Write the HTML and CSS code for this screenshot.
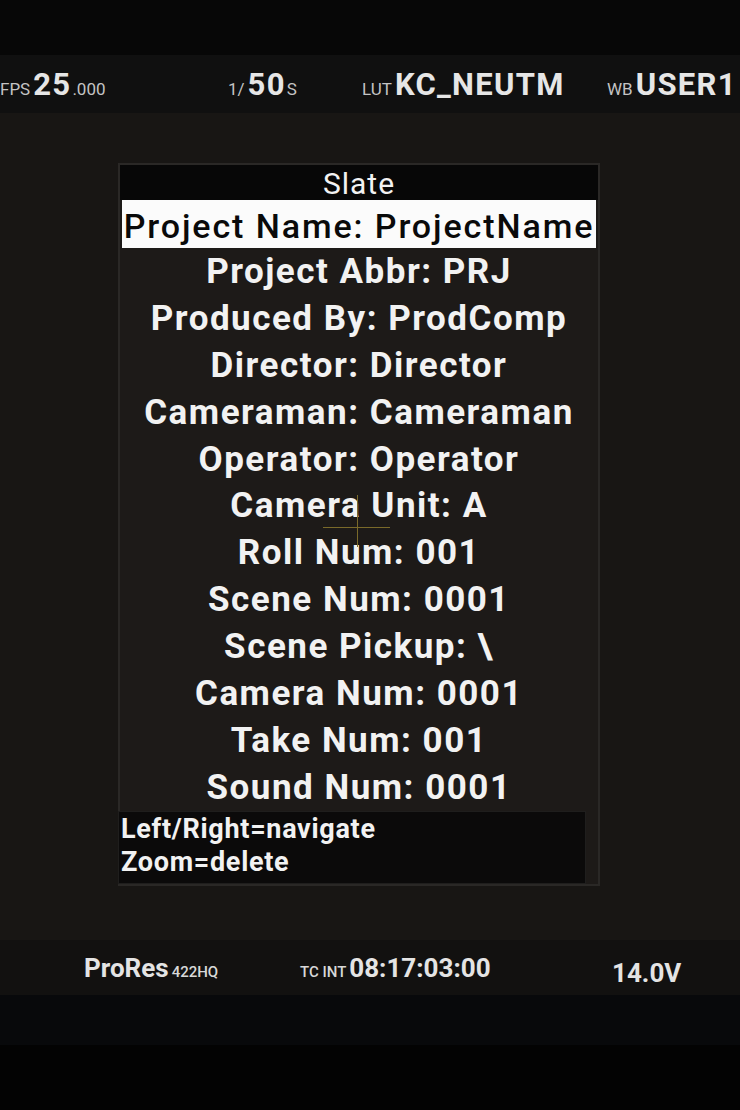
FILE: index.html
```html
<!DOCTYPE html>
<html>
<head>
<meta charset="utf-8">
<link rel="stylesheet" href="styles.css">
</head>
<body>
<div class="screen">
  <div class="top-edge"></div>
  <div class="statusbar">
    <div class="stat"><span class="lbl">FPS</span><span class="big">25</span><span class="lbl">.000</span></div>
    <div class="stat"><span class="lbl">1/</span><span class="big">50</span><span class="lbl">S</span></div>
    <div class="stat"><span class="lbl">LUT</span><span class="big">KC_NEUTM</span></div>
    <div class="stat"><span class="lbl">WB</span><span class="big">USER1</span></div>
  </div>
  <div class="main">
    <div class="panel">
      <div class="title">Slate</div>
      <div class="row selected">Project Name: ProjectName</div>
      <div class="row">Project Abbr: PRJ</div>
      <div class="row">Produced By: ProdComp</div>
      <div class="row">Director: Director</div>
      <div class="row">Cameraman: Cameraman</div>
      <div class="row">Operator: Operator</div>
      <div class="row">Camera Unit: A</div>
      <div class="row">Roll Num: 001</div>
      <div class="row">Scene Num: 0001</div>
      <div class="row">Scene Pickup: \</div>
      <div class="row">Camera Num: 0001</div>
      <div class="row">Take Num: 001</div>
      <div class="row">Sound Num: 0001</div>
      <div class="hint">
        <div>Left/Right=navigate</div>
        <div>Zoom=delete</div>
      </div>
      <div class="cross-v"></div>
      <div class="cross-h"></div>
    </div>
  </div>
  <div class="bottombar">
    <div class="stat"><span class="big2">ProRes</span><span class="lbl2">422HQ</span></div>
    <div class="stat"><span class="lbl2">TC INT</span><span class="big2">08:17:03:00</span></div>
    <div class="stat volt"><span class="big2">14.0V</span></div>
  </div>
  <div class="bottom-dark"></div>
  <div class="bottom-black"></div>
</div>
</body>
</html>
```

FILE: styles.css
```css
html, body {
  margin: 0;
  padding: 0;
  background: #050505;
}
.screen {
  width: 740px;
  height: 1110px;
  display: flex;
  flex-direction: column;
  font-family: Roboto, "Liberation Sans", sans-serif;
  color: #f2f2f2;
  overflow: hidden;
}
.top-edge {
  height: 55px;
  background: #070707;
}
.statusbar {
  height: 58px;
  background: #101010;
  display: grid;
  grid-template-columns: 228px 134px 245px 1fr;
  align-items: center;
  color: #e6e6e6;
}
.stat {
  display: flex;
  align-items: baseline;
  white-space: nowrap;
}
.lbl {
  font-size: 17px;
  color: #c4c4c4;
  margin-right: 3px;
}
.big {
  font-size: 31px;
  font-weight: 700;
  letter-spacing: 1.3px;
  margin-right: 1px;
}
.main {
  height: 827px;
  background: #181614;
  padding: 50px 0 0 118px;
  box-sizing: border-box;
}
.panel {
  position: relative;
  width: 482px;
  background: #1d1a18;
  border: 2px solid #2a2826;
  box-sizing: border-box;
  padding: 0 2px 0 2px;
}
.title {
  height: 35px;
  background: #070707;
  text-align: center;
  font-size: 30px;
  letter-spacing: 1px;
  line-height: 38px;
  margin: 0 -2px;
}
.row {
  height: 46.9px;
  text-align: center;
  font-size: 35px;
  font-weight: 700;
  letter-spacing: 1.5px;
  line-height: 47px;
  white-space: nowrap;
}
.row.selected {
  background: #fbfbfb;
  color: #0a0a0a;
  font-weight: 500;
  font-size: 34px;
  letter-spacing: 1.9px;
  height: 48px;
  line-height: 52px;
}
.hint {
  margin: 0 10px 0 -4px;
  background: #0b0a0a;
  border: 1px solid #1f1e1d;
  height: 73px;
  padding: 1px 2px;
  box-sizing: border-box;
  font-size: 27px;
  font-weight: 700;
  letter-spacing: 0.7px;
  line-height: 33px;
}
.cross-v {
  position: absolute;
  left: 237px;
  top: 330px;
  width: 1px;
  height: 52px;
  background: #7a6a2a;
}
.cross-h {
  position: absolute;
  left: 203px;
  top: 362px;
  width: 67px;
  height: 1px;
  background: #7a6a2a;
}
.bottombar {
  height: 55px;
  background: #121110;
  display: grid;
  grid-template-columns: 216px 312px 1fr;
  padding-left: 84px;
  align-items: center;
  color: #e4e4e4;
}
.big2 {
  font-size: 26px;
  font-weight: 700;
  margin-right: 3px;
}
.lbl2 {
  font-size: 15px;
  font-weight: 500;
  margin-right: 3px;
  color: #d8d8d8;
}
.volt { padding-top: 10px; }
.bottom-dark {
  height: 50px;
  background: #08090b;
}
.bottom-black {
  flex: 1;
  background: #030303;
}
```
